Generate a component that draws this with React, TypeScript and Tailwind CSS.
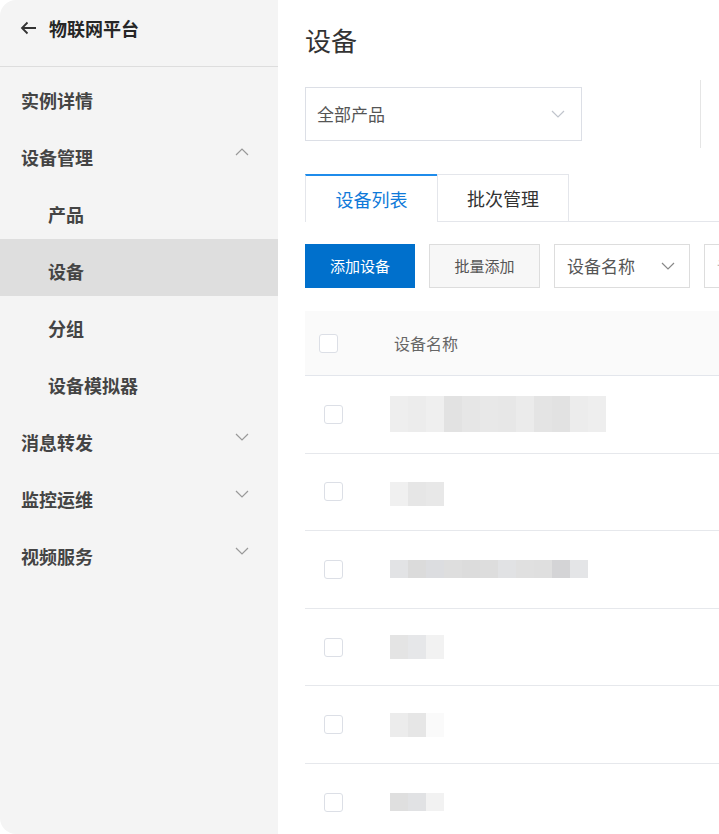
import React from 'react';

const font = { fontFamily: '"Noto Sans CJK SC", "Noto Sans", sans-serif' };

const Chevron = ({ up = false, className = '' }: { up?: boolean; className?: string }) => (
  <svg width="14" height="8" viewBox="0 0 14 8" className={className} fill="none">
    <path
      d={up ? 'M1 7L7 1L13 7' : 'M1 1L7 7L13 1'}
      stroke="currentColor"
      strokeWidth="1.2"
    />
  </svg>
);

interface MenuItem {
  label: string;
  sub?: boolean;
  active?: boolean;
  arrow?: 'up' | 'down';
}

const menu: MenuItem[] = [
  { label: '实例详情' },
  { label: '设备管理', arrow: 'up' },
  { label: '产品', sub: true },
  { label: '设备', sub: true, active: true },
  { label: '分组', sub: true },
  { label: '设备模拟器', sub: true },
  { label: '消息转发', arrow: 'down' },
  { label: '监控运维', arrow: 'down' },
  { label: '视频服务', arrow: 'down' },
];

// pixelated (masked) device names
const rows: { cells: string[]; top: number; h: number }[] = [
  { cells: ['#eee', '#ececec', '#efefef', '#e2e2e2', '#e6e6e6', '#e8e8e8', '#e7e7e7', '#ebebeb', '#e4e4e4', '#e2e2e2', '#ececec', '#eee'], top: 0, h: 36 },
  { cells: ['#f0f0f0', '#e6e6e6', '#e8e8e8'], top: 4, h: 24 },
  { cells: ['#e2e3e5', '#dbdbdb', '#dcdde0', '#dedede', '#dcdcdc', '#dddddd', '#e1e2e4', '#e0e0e0', '#dfdfdf', '#d4d4d6', '#e4e5e7'], top: 0, h: 18 },
  { cells: ['#e4e4e4', '#e6e7e9', '#f2f2f2'], top: 0, h: 24 },
  { cells: ['#ececec', '#e6e6e6', '#fafafa'], top: 0, h: 24 },
  { cells: ['#dfdfdf', '#e1e2e4', '#f2f2f2'], top: 0, h: 18 },
];

const Checkbox = () => (
  <div className="w-[19px] h-[19px] rounded-[3px] border border-[#dcdfe6] bg-white" />
);

export default function App() {
  return (
    <div className="w-full h-[834px] bg-white" style={font}>
      <div className="flex h-full overflow-hidden rounded-l-[16px] bg-white">
        {/* Sidebar */}
        <aside className="w-[278px] shrink-0 bg-[#f4f4f4] flex flex-col">
          <div className="h-[67px] flex items-start pt-[16px] pl-[20px] gap-[12px] border-b border-[#dddddd]">
            <svg width="17" height="14" viewBox="0 0 17 14" fill="none" className="text-[#333] mt-[5px]">
              <path d="M16 7H2M7.5 1.5L2 7l5.5 5.5" stroke="currentColor" strokeWidth="1.8" />
            </svg>
            <span className="text-[18px] leading-[24px] font-bold text-[#262626]">物联网平台</span>
          </div>
          <nav className="pt-[1px]">
            {menu.map((m) => (
              <div
                key={m.label}
                className={`h-[57px] pt-[8px] flex items-center justify-between pr-[29px] ${m.sub ? 'pl-[48px]' : 'pl-[21px]'} ${m.active ? 'bg-[#dedede]' : ''}`}
              >
                <span className="text-[18px] font-bold text-[#444]">{m.label}</span>
                {m.arrow && <Chevron up={m.arrow === 'up'} className="text-[#999] -mt-[12px]" />}
              </div>
            ))}
          </nav>
        </aside>

        {/* Main */}
        <main className="flex-1 min-w-0 pl-[27px] overflow-hidden">
          <h1 className="pt-[20px] text-[26px] leading-[40px] text-[#333] whitespace-nowrap">设备</h1>

          <div className="mt-[20px] flex items-center">
            <div className="w-[277px] h-[54px] border border-[#dcdfe6] flex items-center justify-between pl-[11px] pr-[16px] shrink-0">
              <span className="text-[17px] text-[#555]">全部产品</span>
              <Chevron className="text-[#c0c4cc]" />
            </div>
            <div className="ml-[118px] w-px h-[68px] bg-[#e5e5e5] shrink-0" />
          </div>

          {/* Tabs */}
          <div className="mt-[26px] flex h-[48px] items-end border-b border-[#e4e6eb]">
            <div className="w-[132px] h-[48px] border-t-2 border-[#1f8ceb] border-l border-l-[#e4e6eb] bg-white -mb-px flex items-center justify-center text-[18px] text-[#0f7ad9] shrink-0">
              设备列表
            </div>
            <div className="w-[132px] h-[47px] border border-[#e4e6eb] border-b-0 flex items-center justify-center text-[18px] text-[#333] shrink-0">
              批次管理
            </div>
          </div>

          {/* Toolbar */}
          <div className="mt-[22px] flex items-center gap-[14px] whitespace-nowrap">
            <button className="w-[110px] h-[44px] bg-[#0070cc] text-white text-[15px] shrink-0">添加设备</button>
            <button className="w-[111px] h-[44px] bg-[#f7f7f7] border border-[#dddddd] text-[#555] text-[15px] shrink-0">批量添加</button>
            <div className="w-[136px] h-[44px] border border-[#dddddd] flex items-center justify-between pl-[12px] pr-[14px] shrink-0">
              <span className="text-[17px] text-[#555]">设备名称</span>
              <Chevron className="text-[#888]" />
            </div>
            <div className="w-[200px] h-[44px] border border-[#dddddd] flex items-center pl-[12px] shrink-0">
              <span className="text-[16px] text-[#bbb]">请输入设备名称</span>
            </div>
          </div>

          {/* Table */}
          <div className="mt-[23px]">
            <div className="h-[65px] bg-[#fafafa] border-b border-[#e3e6ec] flex items-center">
              <div className="w-[89px] pl-[14px] shrink-0">
                <Checkbox />
              </div>
              <span className="text-[16px] text-[#666]">设备名称</span>
            </div>
            {rows.map((r, i) => (
              <div key={i} className="h-[77.6px] border-b border-[#e6e8ec] flex items-center">
                <div className="w-[85px] pl-[19px] shrink-0">
                  <Checkbox />
                </div>
                <div className="flex blur-[0.6px]" style={{ marginTop: r.top }}>
                  {r.cells.map((c, j) => (
                    <div key={j} className="w-[18px]" style={{ height: r.h, background: c }} />
                  ))}
                </div>
              </div>
            ))}
          </div>
        </main>
      </div>
    </div>
  );
}
